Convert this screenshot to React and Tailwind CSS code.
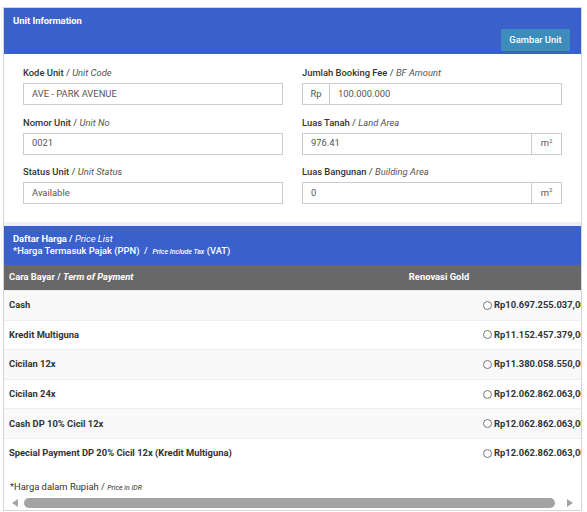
import React from 'react'

const fields = [
  [
    { label: 'Kode Unit', en: 'Unit Code', value: 'AVE - PARK AVENUE' },
    { label: 'Jumlah Booking Fee', en: 'BF Amount', value: '100.000.000', pre: 'Rp' },
  ],
  [
    { label: 'Nomor Unit', en: 'Unit No', value: '0021' },
    { label: 'Luas Tanah', en: 'Land Area', value: '976.41', post: true },
  ],
  [
    { label: 'Status Unit', en: 'Unit Status', value: 'Available' },
    { label: 'Luas Bangunan', en: 'Building Area', value: '0', post: true },
  ],
]

const prices = [
  ['Cash', 'Rp10.697.255.037,00'],
  ['Kredit Multiguna', 'Rp11.152.457.379,00'],
  ['Cicilan 12x', 'Rp11.380.058.550,00'],
  ['Cicilan 24x', 'Rp12.062.862.063,00'],
  ['Cash DP 10% Cicil 12x', 'Rp12.062.862.063,00'],
  ['Special Payment DP 20% Cicil 12x (Kredit Multiguna)', 'Rp12.062.862.063,00'],
]

function Field({ f }) {
  return (
    <div>
      <div className="text-[9.4px] leading-[14px] text-[#333] mb-[3px]">
        <span className="font-medium">{f.label}</span> /{' '}
        <span className="italic text-[#555]">{f.en}</span>
      </div>
      <div className="flex h-[22px] border border-[#ccc] bg-white text-[9.4px] text-[#555]">
        {f.pre && (
          <div className="w-[27px] border-r border-[#ccc] flex items-center justify-center">{f.pre}</div>
        )}
        <div className="flex-1 flex items-center px-[8px]">{f.value}</div>
        {f.post && (
          <div className="w-[30px] border-l border-[#ccc] flex items-center justify-center">
            m<sup className="text-[6px]">2</sup>
          </div>
        )}
      </div>
    </div>
  )
}

export default function App() {
  return (
    <div className="w-[587px] h-[512px] bg-white font-['Roboto',sans-serif] overflow-hidden pt-[7px] pl-[3px]">
      <div className="w-[579px] h-[504px] border border-[#d2d6de] bg-[#ecf0f5] flex flex-col">
        <div className="bg-white">
          <div className="h-[46px] bg-[#3a61cb] px-[9px] pt-[7px] flex flex-col">
            <div className="text-[9.4px] leading-[12px] font-bold text-white">Unit Information</div>
            <div className="flex justify-end mt-[2px] pr-[2px]">
              <div className="h-[22px] w-[69px] bg-[#3c8dbc] text-white text-[9.4px] font-medium flex items-center justify-center">
                Gambar Unit
              </div>
            </div>
          </div>
          <div className="px-[19px] pt-[12px] pb-[18px] flex flex-col gap-[10.5px]">
            {fields.map((row, i) => (
              <div key={i} className="grid grid-cols-2 gap-x-[19px]">
                <Field f={row[0]} />
                <Field f={row[1]} />
              </div>
            ))}
          </div>
        </div>

        <div className="mt-[4px] flex-1 bg-white flex flex-col">
          <div className="h-[39px] bg-[#3a61cb] px-[9px] pt-[7px] text-white text-[9.4px] leading-[12px]">
            <div>
              <span className="font-bold">Daftar Harga /</span> <span className="italic">Price List</span>
            </div>
            <div className="font-medium">
              *Harga Termasuk Pajak (PPN) &nbsp;/&nbsp; <span className="italic text-[7px]">Price Include Tax</span> (VAT)
            </div>
          </div>
          <div className="overflow-hidden">
            <div className="flex h-[25px] bg-[#686868] text-white text-[9.4px] font-bold items-center">
              <div className="w-[293px] shrink-0 pl-[5px]">
                Cara Bayar / <span className="italic">Term of Payment</span>
              </div>
              <div className="w-[284px] shrink-0 text-center">Renovasi Gold</div>
            </div>
            {prices.map(([name, price], i) => (
              <div
                key={name}
                className={`flex h-[29.6px] items-center border-t border-[#eee] text-[9.4px] font-bold text-[#333] ${
                  i % 2 === 0 ? 'bg-[#f9f9f9]' : 'bg-white'
                }`}
              >
                <div className="w-[293px] shrink-0 pl-[5px] whitespace-nowrap">{name}</div>
                <div className="w-[284px] shrink-0 pl-[186px] flex items-center gap-[2px] whitespace-nowrap">
                  <span className="w-[9px] h-[9px] rounded-full border border-[#777] bg-white shrink-0" />
                  <span>{price}</span>
                </div>
              </div>
            ))}
          </div>
          <div className="flex-1" />
          <div className="px-[6px] text-[9.4px] leading-[12px] text-[#333]">
            *Harga dalam Rupiah / <span className="italic text-[7px]">Price in IDR</span>
          </div>
          <div className="h-[11px] mt-[3px] mb-[2px] flex items-center pl-[8px] gap-[6px]">
            <svg width="6" height="8" viewBox="0 0 6 8">
              <path d="M6 0 L0 4 L6 8 Z" fill="#a3a3a3" />
            </svg>
            <div className="h-[10px] w-[536px] rounded-full bg-[#a3a3a3]" />
            <div className="flex-1" />
            <svg width="6" height="8" viewBox="0 0 6 8" className="mr-[8px]">
              <path d="M0 0 L6 4 L0 8 Z" fill="#a3a3a3" />
            </svg>
          </div>
        </div>
      </div>
    </div>
  )
}
